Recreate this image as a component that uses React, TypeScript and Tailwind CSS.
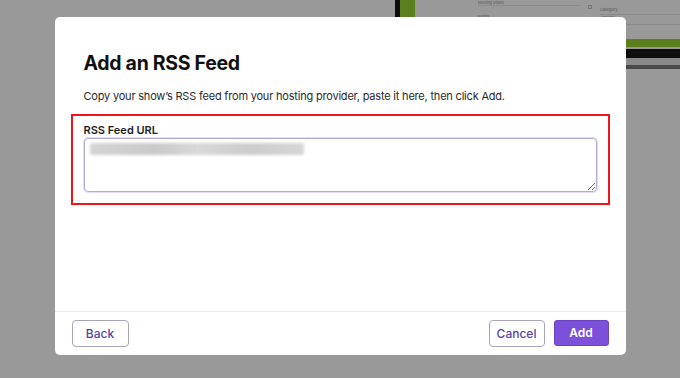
export default function App() {
  return (
    <div className="relative h-[378px] w-[680px] overflow-hidden bg-[#999999] font-['Inter',sans-serif]">
      {/* page behind the dialog, dimmed */}
      <div className="flex h-full items-start">
        <div className="w-[395px]" />
        <div className="h-[120px] w-[5px] bg-[#0c0c0c]" />
        <div className="h-[120px] w-[15px] bg-[#5a7f1c]" />
        <div className="flex flex-1 flex-col">
          <div className="flex h-[39px]">
            <div className="ml-[63px] flex w-[102px] flex-col">
              <div className="text-[4px] leading-[5px] text-[#555]">Moving Video</div>
              <div className="h-px bg-[#8a8a8a]" />
              <div className="mt-[8px] text-[4px] leading-[5px] text-[#555]">Notes</div>
            </div>
            <div className="ml-[8px] mt-[5px] h-[4px] w-[4px] border border-[#777]" />
            <div className="ml-[8px] flex flex-1 flex-col pt-[7px]">
              <div className="text-[4px] leading-[5px] text-[#555]">Category</div>
              <div className="mt-[2px] h-px bg-[#8a8a8a]" />
              <div className="ml-[2px] text-[4px] leading-[6px] text-[#555]">Sports</div>
              <div className="mt-[3px] h-px bg-[#8a8a8a]" />
            </div>
          </div>
          <div className="h-[8px] bg-[#5a7f1c]" />
          <div className="h-[2px]" />
          <div className="h-[9px] bg-[#0e0e0e]" />
          <div className="h-[7px] bg-[#8a8a8a]" />
          <div className="h-[4px] bg-[#4a4a4a]" />
        </div>
      </div>

      {/* dialog */}
      <div className="absolute inset-0 flex justify-center pt-[17px]">
        <div className="flex h-[338px] w-[571px] flex-col rounded-[5px] bg-white">
          <div className="flex-1 px-[16px] pt-[34px]">
            <h1 className="px-[13px] text-[19.5px] font-bold leading-[24px] tracking-[-0.3px] text-[#111]">
              Add an RSS Feed
            </h1>
            <p className="mt-[13px] px-[13px] text-[11px] leading-[16px] tracking-[-0.2px] text-[#2a2a2a]">
              Copy your show’s RSS feed from your hosting provider, paste it here, then click Add.
            </p>
            <div className="mt-[10px] border-2 border-[#f0141c] px-[11px] pb-[11px] pt-[7px]">
              <label className="block text-[11px] font-semibold leading-[14px] text-[#1e1e1e]">RSS Feed URL</label>
              <div className="relative mt-[1px]">
                <textarea
                  className="block h-[54px] w-full resize rounded-[4px] border border-[#b4a8dc] px-[6px] py-[4px] shadow-[0_0_0_1px_#e2dcf5] outline-none"
                  defaultValue=""
                />
                <div className="absolute left-[6px] top-[5px] h-[12px] w-[214px] rounded-[2px] bg-[linear-gradient(90deg,#d4d4d4,#c9c9c9_30%,#d8d8d8_50%,#cccccc_75%,#d6d6d6)] blur-[1.5px]" />
              </div>
            </div>
          </div>
          <div className="flex h-[44px] items-center justify-between border-t border-[#ececec] px-[17px]">
            <button className="h-[27px] w-[57px] rounded-[4px] border border-[#a9a4b8] bg-white text-[12px] font-medium text-[#5a3fa3]">
              Back
            </button>
            <div className="flex gap-[9px]">
              <button className="h-[27px] w-[56px] rounded-[4px] border border-[#a9a4b8] bg-white text-[12px] font-medium text-[#5a3fa3]">
                Cancel
              </button>
              <button className="h-[26px] w-[55px] rounded-[3px] border border-[#6a44c4] bg-[#7c50d8] text-[12px] font-semibold text-white">
                Add
              </button>
            </div>
          </div>
        </div>
      </div>
    </div>
  );
}
